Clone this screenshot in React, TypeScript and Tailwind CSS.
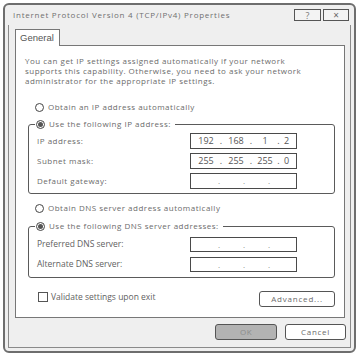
import React from 'react';

const tracked = "font-['Open_Sans',sans-serif] text-[8px] tracking-[0.5px] text-[#6b6b6b]";
const plain = "font-['Open_Sans',sans-serif] text-[8.5px] tracking-[0px] text-[#5f5f5f]";

function Radio({ checked }: { checked?: boolean }) {
  return (
    <span className="flex h-[9px] w-[9px] shrink-0 items-center justify-center rounded-full border border-[#444] bg-white">
      {checked && <span className="h-[5px] w-[5px] rounded-full bg-[#555]" />}
    </span>
  );
}

function IpBox({ parts, h }: { parts?: string[]; h: string }) {
  if (!parts) {
    return (
      <div className={`flex w-[107px] items-center border border-[#4a4a4a] bg-white pl-[27px] ${h}`}>
        {['.', '.', '.'].map((d, i) => (
          <span key={i} className={`w-[25px] text-[#8a8a8a] ${tracked}`}>{d}</span>
        ))}
      </div>
    );
  }
  return (
    <div className={`flex w-[107px] items-center border border-[#4a4a4a] bg-white pl-[4px] ${h} font-['Open_Sans',sans-serif] text-[9px] text-[#555]`}>
      <span className="w-[22px] text-center">{parts[0]}</span>
      <span className="w-[8px] text-center">.</span>
      <span className="w-[22px] text-center">{parts[1]}</span>
      <span className="w-[8px] text-center">.</span>
      <span className="w-[20px] text-center">{parts[2]}</span>
      <span className="w-[7px] text-center">.</span>
      <span className="w-[9px] text-center">{parts[3]}</span>
    </div>
  );
}

export default function App() {
  return (
    <div className="h-[356px] w-[361px] bg-white pl-[3px] pt-[3px]">
      <div className="flex h-[350px] w-[353px] flex-col rounded-[6px] border-2 border-[#6e6e6e] bg-[#efefef]">
        {/* Title bar */}
        <div className="flex h-[20px] items-center pl-[8px] pr-[5px]">
          <span className={`flex-1 ${tracked} tracking-[0.75px] text-[#707070]`}>Internet Protocol Version 4 (TCP/IPv4) Properties</span>
          <div className="flex gap-[2px]">
            <div className="flex h-[12px] w-[27px] items-center justify-center border border-[#555] bg-[#f3f3f3] font-['Open_Sans',sans-serif] text-[9px] leading-none text-[#777]">?</div>
            <div className="flex h-[12px] w-[26px] items-center justify-center border border-[#555] bg-[#f3f3f3] font-['Open_Sans',sans-serif] text-[10px] leading-none text-[#666]">×</div>
          </div>
        </div>

        {/* Client frame */}
        <div className="mx-[3px] mb-[3px] flex flex-1 flex-col border-x border-b border-[#8a8a8a] pt-[4px]">
          <div className="flex pl-[6px]">
            <div className="relative z-10 -mb-px flex h-[17px] w-[45px] items-center border-x border-t border-[#777] bg-white pl-[4px] font-['Liberation_Sans',Arial,sans-serif] text-[9.5px] text-[#555]">
              General
            </div>
          </div>

          {/* Tab panel */}
          <div className="ml-[6px] mr-[5px] border border-[#777] bg-white px-[9px] pb-[10px] pt-[10px]">
            <p className={`leading-[10px] ${tracked}`}>
              You can get IP settings assigned automatically if your network
              <br />
              supports this capability. Otherwise, you need to ask your network
              <br />
              administrator for the appropriate IP settings.
            </p>

            <div className="mt-[16px] flex h-[10px] items-center gap-[4px] pl-[10px]">
              <Radio />
              <span className={tracked}>Obtain an IP address automatically</span>
            </div>

            <fieldset className="ml-[3px] mt-[7px] rounded-[3px] border border-[#5a5a5a] pb-[4px] pl-[8px] pr-[37px] pt-[4px]">
              <legend className="-ml-[2px] flex h-[10px] items-center gap-[4px] bg-white pl-px pr-[4px]">
                <Radio checked />
                <span className={tracked}>Use the following IP address:</span>
              </legend>
              <div className="flex flex-col gap-[4px]">
                <div className="flex items-center justify-between">
                  <span className={tracked}>IP address:</span>
                  <IpBox h="h-[16px]" parts={['192', '168', '1', '2']} />
                </div>
                <div className="flex items-center justify-between">
                  <span className={tracked}>Subnet mask:</span>
                  <IpBox h="h-[16px]" parts={['255', '255', '255', '0']} />
                </div>
                <div className="flex items-center justify-between">
                  <span className={tracked}>Default gateway:</span>
                  <IpBox h="h-[16px]" />
                </div>
              </div>
            </fieldset>

            <div className="mt-[9px] flex h-[10px] items-center gap-[4px] pl-[10px]">
              <Radio />
              <span className={tracked}>Obtain DNS server address automatically</span>
            </div>

            <fieldset className="ml-[3px] mt-[8px] rounded-[3px] border border-[#5a5a5a] pb-[5px] pl-[8px] pr-[37px] pt-[6px]">
              <legend className="-ml-[2px] flex h-[10px] items-center gap-[4px] bg-white pl-px pr-[4px]">
                <Radio checked />
                <span className={tracked}>Use the following DNS server addresses:</span>
              </legend>
              <div className="flex flex-col gap-[5px]">
                <div className="flex items-center justify-between">
                  <span className={plain}>Preferred DNS server:</span>
                  <IpBox h="h-[15px]" />
                </div>
                <div className="flex items-center justify-between">
                  <span className={plain}>Alternate DNS server:</span>
                  <IpBox h="h-[15px]" />
                </div>
              </div>
            </fieldset>

            <div className="mt-[13px] flex items-center justify-between pl-[13px]">
              <div className="flex items-center gap-[3px] self-start">
                <span className="h-[10px] w-[10px] border border-[#555] bg-white" />
                <span className={plain}>Validate settings upon exit</span>
              </div>
              <div className={`flex h-[16px] w-[76px] items-center justify-center rounded-[3px] border border-[#555] bg-white ${tracked} tracking-[0.8px]`}>
                Advanced...
              </div>
            </div>
          </div>

          {/* Dialog buttons */}
          <div className="mt-[6px] flex justify-end gap-[8px] pr-[4px]">
            <div className={`flex h-[16px] w-[62px] items-center justify-center rounded-[3px] border border-[#555] bg-[#b3b3b3] ${tracked} text-[#8c8c8c]`}>
              OK
            </div>
            <div className={`flex h-[16px] w-[61px] items-center justify-center rounded-[3px] border border-[#555] bg-white ${tracked} tracking-[0.7px]`}>
              Cancel
            </div>
          </div>
        </div>
      </div>
    </div>
  );
}
